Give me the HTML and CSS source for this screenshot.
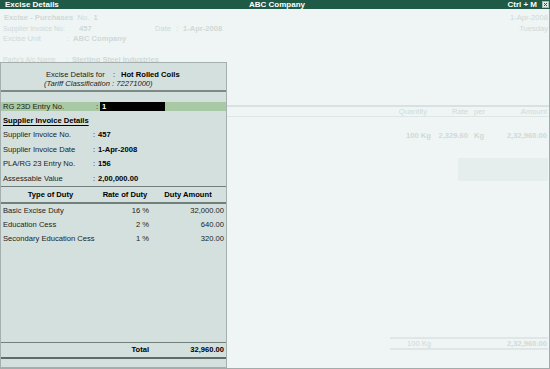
FILE: index.html
```html
<!DOCTYPE html>
<html>
<head>
<meta charset="utf-8">
<link rel="stylesheet" href="styles.css">
</head>
<body>
<div class="screen">
  <div class="titlebar">
    <span class="tb-left">Excise Details</span>
    <span class="tb-center">ABC Company</span>
    <span class="tb-right">Ctrl + M
      <svg class="close" viewBox="0 0 7 7"><rect x="0.5" y="0.5" width="6" height="6" fill="#e2ebe8" stroke="#a9bab4"/><path d="M2 2L5 5M5 2L2 5" stroke="#1e5a45" stroke-width="1"/></svg>
    </span>
  </div>
  <div class="main">
    <div class="bg-top">
      <div class="bg-fields">
        <div class="bg-row r1"><b>Excise - Purchases</b>&nbsp; No.&nbsp; <b>1</b></div>
        <div class="bg-row"><span class="w60 narrow">Supplier Invoice No</span><span class="w16">:</span><b class="w76">457</b><span class="w21">Date</span><span class="w7">:</span><b>1-Apr-2008</b></div>
        <div class="bg-row"><span class="w64">Excise Unit</span><span class="w6">:</span><b>ABC Company</b></div>
        <div class="bg-row r4"><span class="w63 narrow">Party's A/c Name</span><span class="w6">:</span><b>Sterling Steel Industries</b></div>
      </div>
      <div class="bg-date">
        <div class="bg-row">1-Apr-2008</div>
        <div class="bg-row">Tuesday</div>
      </div>
    </div>
    <div class="bg-thead">
      <span class="c-qty h-qty">Quantity</span>
      <span class="c-rate">Rate</span>
      <span class="c-per">per</span>
      <span class="c-amt">Amount</span>
    </div>
    <div class="bg-trow">
      <b class="c-qty">100 Kg</b>
      <b class="c-rate">2,329.60</b>
      <b class="c-per">Kg</b>
      <b class="c-amt">2,32,960.00</b>
    </div>
    <div class="bg-box"></div>
    <div class="bg-total">
      <span>100 Kg</span>
      <b>2,32,960.00</b>
    </div>

    <div class="panel">
      <div class="p-head">
        <div class="ph1"><span class="ph-lbl">Excise Details for</span><span class="ph-col">:</span><b>Hot Rolled Coils</b></div>
        <div class="ph2"><i>(Tariff Classification : 72271000)</i></div>
      </div>
      <div class="p-sep"></div>
      <div class="p-rg">
        <span class="rg-lbl">RG 23D Entry No.</span><span class="rg-col">:</span><b class="rg-input">1</b>
      </div>
      <div class="p-section">Supplier Invoice Details</div>
      <div class="p-row"><span class="pr-lbl">Supplier Invoice No.</span><span class="pr-col">:</span><b>457</b></div>
      <div class="p-row"><span class="pr-lbl">Supplier Invoice Date</span><span class="pr-col">:</span><b>1-Apr-2008</b></div>
      <div class="p-row"><span class="pr-lbl">PLA/RG 23 Entry No.</span><span class="pr-col">:</span><b>156</b></div>
      <div class="p-row"><span class="pr-lbl">Assessable Value</span><span class="pr-col">:</span><b>2,00,000.00</b></div>
      <div class="p-grid p-thead">
        <span>Type of Duty</span>
        <span>Rate of Duty</span>
        <span>Duty Amount</span>
      </div>
      <div class="p-grid p-drow"><span class="d1">Basic Excise Duty</span><span class="d2">16 %</span><span class="d3">32,000.00</span></div>
      <div class="p-grid p-drow"><span class="d1">Education Cess</span><span class="d2">2 %</span><span class="d3">640.00</span></div>
      <div class="p-grid p-drow"><span class="d1">Secondary Education Cess</span><span class="d2">1 %</span><span class="d3">320.00</span></div>
      <div class="p-fill"></div>
      <div class="p-grid p-total"><span></span><b class="d2">Total</b><b class="d3">32,960.00</b></div>
    </div>
  </div>
</div>
</body>
</html>
```
FILE: styles.css
```css
* { box-sizing: border-box; margin: 0; padding: 0; }
html, body { width: 550px; height: 369px; overflow: hidden; }
body {
  font-family: "Liberation Sans", Arial, sans-serif;
  font-size: 7.6px;
  color: #1b1b1b;
  background: #eef5f4;
}
.screen { width: 550px; height: 369px; display: flex; flex-direction: column; }

.titlebar {
  height: 9px;
  background: #1e5a45;
  color: #fff;
  font-weight: bold;
  font-size: 8px;
  line-height: 9px;
  display: grid;
  grid-template-columns: 1fr auto 1fr;
  padding: 0 1px 0 5px;
  white-space: nowrap;
}
.tb-center { text-align: center; }
.tb-right { justify-self: end; display: flex; align-items: center; gap: 5px; }
.close { width: 7px; height: 7px; display: block; }

.main {
  flex: 1;
  position: relative;
  border-right: 1px solid #a3acaa;
  border-bottom: 1px solid #a3acaa;
  display: flex;
  flex-direction: column;
  padding-left: 3px;
  color: #d0d9d7;
  background: #eef5f4;
}
.main b { font-weight: bold; }

.bg-top { margin-top: 4px; display: flex; justify-content: space-between; padding-right: 1px; }
.bg-row { line-height: 10.5px; height: 10.5px; white-space: nowrap; display: flex; }
.bg-date .bg-row { justify-content: flex-end; }
.r1 { padding-left: 1px; display: block; }
.r4 { margin-top: 10.25px; }
.narrow { font-size: 6.9px; }
.w60 { width: 60px; } .w16 { width: 16px; } .w76 { width: 76px; }
.w21 { width: 21px; } .w7 { width: 7px; } .w64 { width: 64px; }
.w6 { width: 6px; } .w63 { width: 63px; }

.bg-thead, .bg-trow {
  display: grid;
  grid-template-columns: 1fr 37px 30px 50px;
  padding-right: 1px;
  white-space: nowrap;
}
.bg-thead {
  margin-top: 39.75px;
  border-top: 2px solid #d9e1e0;
  border-bottom: 1px solid #dfe7e6;
  line-height: 9px;
  height: 12px;
}
.bg-trow { margin-top: 14px; line-height: 10px; }
.c-qty, .c-rate, .c-amt { text-align: right; }
.c-per { padding-left: 6px; }
.c-amt { padding-right: 1px; }
.h-qty { padding-right: 4px; }

.bg-box {
  margin-top: 17px;
  height: 23px;
  width: 90px;
  align-self: flex-end;
  margin-right: 1px;
  background: #e6eeed;
}
.bg-total {
  margin-top: auto;
  margin-bottom: 18px;
  align-self: flex-end;
  width: 158px;
  margin-right: 1px;
  border-top: 2px solid #dfe7e6;
  border-bottom: 2px solid #dfe7e6;
  line-height: 9px;
  display: flex;
  justify-content: space-between;
  padding: 0 1px 0 17px;
}

.panel {
  position: absolute;
  top: 53px;
  left: 0;
  width: 227px;
  bottom: 0;
  background: #d4e0dd;
  border: 1px solid #a5afad;
  display: flex;
  flex-direction: column;
  padding-bottom: 8px;
  color: #222;
  white-space: nowrap;
}
.panel b { color: #000; }

.p-head { padding-top: 6.5px; line-height: 9px; }
.ph1 { padding-left: 45px; display: flex; }
.ph-lbl { width: 67px; }
.ph-col { width: 8px; }
.ph2 { padding-left: 43px; }

.p-sep { margin-top: 2.5px; height: 2px; background: #7d8986; }

.p-rg {
  margin-top: 9.5px;
  height: 9px;
  line-height: 9px;
  background: #a8c9a4;
  display: flex;
  padding-left: 2px;
}
.rg-lbl { width: 93px; }
.rg-col { width: 4px; }
.panel .rg-input { width: 65px; background: #000; color: #fff; padding-left: 2px; }

.p-section {
  margin-top: 3.5px;
  line-height: 14px;
  padding-left: 2px;
  font-weight: bold;
  color: #000;
  text-decoration: underline;
  text-underline-offset: 1.5px;
}
.p-row { line-height: 14.6px; height: 14.6px; display: flex; padding-left: 2px; }
.pr-lbl { width: 90px; }
.pr-col { width: 5px; }

.p-grid { display: grid; grid-template-columns: 99px 50px 1fr; }
.p-thead {
  border-top: 1px solid #727e7b;
  border-bottom: 2px solid #72807c;
  line-height: 15px;
  font-weight: bold;
  color: #000;
  text-align: center;
}
.p-drow { line-height: 14px; }
.d1 { padding-left: 2px; }
.d2 { text-align: right; padding-right: 1px; }
.d3 { text-align: right; padding-right: 2px; }
.p-fill { flex: 1; }
.p-total {
  border-top: 1px solid #72807c;
  border-bottom: 2px solid #5e6b68;
  line-height: 14px;
}
```
